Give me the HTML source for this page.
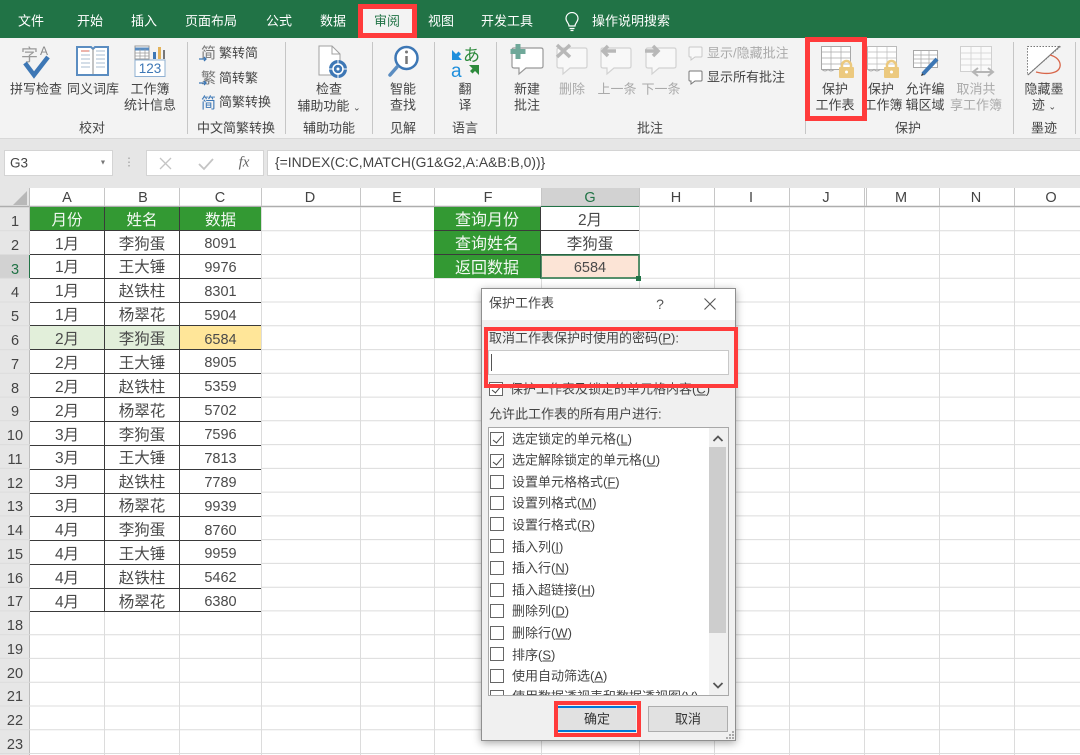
<!DOCTYPE html>
<html lang="zh"><head><meta charset="utf-8"><title>保护工作表</title>
<style>
html,body{margin:0;padding:0}
body{width:1080px;height:755px;overflow:hidden;position:relative;background:#fff;font-family:"Liberation Sans","Noto Sans CJK SC",sans-serif;color:#444}
.a{position:absolute}
.c{position:absolute;transform:translate(-50%,-50%);white-space:nowrap;line-height:1}
.l{position:absolute;transform:translateY(-50%);white-space:nowrap;line-height:1}
.tab{color:#fff;font-size:13px}
.r{font-size:13px;color:#444}
.g{color:#aaa}
.sep{position:absolute;top:42px;height:92px;width:1px;background:#c6c6c6}
.ch{font-size:14.5px;color:#444;top:198px}
.rh{font-size:14.5px;color:#444;left:15px}
.tbl{position:absolute;display:grid;gap:1px;background:#3a3a3a;font-size:15.5px;line-height:1;color:#4a4a4a}
.tbl div{background:#fff;display:flex;align-items:center;justify-content:center;white-space:nowrap;min-height:0;overflow:hidden;box-sizing:border-box;padding-top:4px}
.tbl .h{background:#339933;color:#f2f8f2}
.tbl .n{font-size:14.5px}
.red{position:absolute;border:4px solid #ff3b3b;box-sizing:border-box}
.cb{position:absolute;left:490px;width:14px;height:14px;box-sizing:border-box;border:1px solid #666;background:#fff}
.cb.on::after{content:"";position:absolute;left:3.5px;top:0.5px;width:4px;height:8px;border:solid #444;border-width:0 1.3px 1.3px 0;transform:rotate(40deg)}
.it{position:absolute;left:512px;font-size:13px;color:#444;white-space:nowrap;line-height:1;transform:translateY(-50%)}
</style></head><body>

<!-- title / tabs -->
<div class="a" style="left:0;top:0;width:1080px;height:38px;background:#217346"></div>
<div class="a" style="left:358px;top:4px;width:59px;height:34px;background:#f3f3f3"></div>
<div class="c tab" style="left:31px;top:21px">文件</div>
<div class="c tab" style="left:90px;top:21px">开始</div>
<div class="c tab" style="left:144px;top:21px">插入</div>
<div class="c tab" style="left:211px;top:21px">页面布局</div>
<div class="c tab" style="left:279px;top:21px">公式</div>
<div class="c tab" style="left:333px;top:21px">数据</div>
<div class="c tab" style="left:387px;top:21px;color:#217346">审阅</div>
<div class="c tab" style="left:441px;top:21px">视图</div>
<div class="c tab" style="left:507px;top:21px">开发工具</div>
<div class="c tab" style="left:631px;top:21px">操作说明搜索</div>
<svg class="a" style="left:563px;top:12px" width="18" height="20" viewBox="0 0 18 20" fill="none" stroke="#fff" stroke-width="1.2"><path d="M6 14c0-3-3-4-3-7.500a6 6 0 0 1 12 0c0 3.500-3 4.500-3 7.500z"/><path d="M6.500 16.500h5M7.500 18.500h3"/></svg>

<!-- ribbon -->
<div class="a" style="left:0;top:38px;width:1080px;height:100px;background:#f3f3f3"></div>
<div class="a" style="left:0;top:138px;width:1080px;height:50px;background:#e6e6e6;border-top:1px solid #d8d8d8;box-sizing:border-box"></div>
<div class="sep" style="left:187px"></div><div class="sep" style="left:285px"></div><div class="sep" style="left:372px"></div><div class="sep" style="left:434px"></div><div class="sep" style="left:496px"></div><div class="sep" style="left:805px"></div><div class="sep" style="left:1013px"></div><div class="sep" style="left:1075px"></div>

<svg class="a" style="left:0;top:38px;overflow:visible" width="1080" height="100" viewBox="0 38 1080 100" fill="none">
<!-- spell -->
<text x="21" y="61" font-size="17" fill="#9a9a9a" font-family="Liberation Sans,Noto Sans CJK SC,sans-serif">字</text>
<text x="40" y="55" font-size="12" fill="#8a8a8a" font-family="Liberation Sans,sans-serif">A</text>
<path d="M25 63l9 12 14-18" stroke="#3d77b5" stroke-width="4.500"/>
<!-- book -->
<path d="M77 47h14l2 2 2-2h13v28H77z" fill="#fff" stroke="#5b8dc1" stroke-width="2"/>
<path d="M93 49v25" stroke="#8a8a8a"/>
<path d="M81 51h9M81 55h9M81 59h9M81 63h9M81 67h9M96 51h9M96 55h9M96 59h9M96 63h9M96 67h9" stroke="#a8bcd2"/>
<path d="M81 51h8" stroke="#d86a5a"/>
<!-- stats -->
<rect x="135" y="46" width="14" height="13" fill="#fff" stroke="#9a9a9a"/>
<path d="M135 49h14" stroke="#5b8dc1" stroke-width="3"/><path d="M135 53h14M135 56h14M140 49v10M145 49v10" stroke="#9a9a9a" stroke-width=".7"/>
<path d="M153 52h3v7h-3z" fill="#3d77b5"/><path d="M158 47h3v12h-3z" fill="#e3b35b"/><path d="M163 50h2v9h-2z" fill="#777"/>
<rect x="135" y="60" width="30" height="16.500" fill="#fff" stroke="#8fb0d2"/>
<text x="150" y="73" font-size="13.500" fill="#3d77b5" text-anchor="middle" font-family="Liberation Sans,sans-serif">123</text>
<!-- convert -->
<g font-family="Liberation Sans,Noto Sans CJK SC,sans-serif" font-size="15" fill="#777">
<text x="201" y="58">简</text><text x="201" y="83">繁</text><text x="201" y="108" fill="#3d77b5">简</text></g>
<path d="M199 59h7m-2-2l2 2-2 2M199 83h7m-2-2l2 2-2 2" stroke="#3d77b5" stroke-width="1.300"/>
<!-- doc -->
<path d="M319 46h13l8 8v21h-21z" fill="#fff" stroke="#a0a0a0"/><path d="M332 46v8h8" stroke="#a0a0a0"/>
<circle cx="338" cy="69" r="9" fill="#3d77b5"/><circle cx="338" cy="69" r="5" fill="none" stroke="#fff" stroke-width="1.500"/><circle cx="338" cy="69" r="1.500" fill="#fff"/><path d="M338 60v5M338 73v5M329 69h5M342 69h5" stroke="#fff"/>
<!-- smart -->
<circle cx="406.500" cy="58" r="11" fill="#fff" stroke="#3d77b5" stroke-width="2.500"/>
<path d="M406.500 56v8" stroke="#777" stroke-width="2.500"/><circle cx="406.500" cy="52" r="1.500" fill="#777"/>
<path d="M397 67l-7 8" stroke="#5b8dc1" stroke-width="3.500" stroke-linecap="round"/>
<!-- translate -->
<text x="463" y="61" font-size="17" fill="#2e8b3d" font-family="Noto Sans CJK JP,sans-serif">あ</text>
<text x="451" y="77" font-size="19" fill="#1f8fdc" font-family="Liberation Sans,sans-serif">a</text>
<path d="M452 50v10h10l-3.500-3.500 2.500-2.500-2.500-2.500-2.500 2.500z" fill="#1f8fdc"/>
<path d="M479 75v-10h-10l3.500 3.500-2.500 2.500 2.500 2.500 2.500-2.500z" fill="#2e8b3d"/>
<!-- new comment -->
<path d="M514 48h27q2 0 2 2v16q0 2-2 2h-15l-7 6v-6h-5q-2 0-2-2V50q0-2 2-2z" fill="#fff" stroke="#999" stroke-width="1.200"/>
<path d="M518 44v15M510.500 51.500h15" stroke="#6fa899" stroke-width="5"/>
<g stroke="#d2d2d2" stroke-width="1.200" fill="#f8f8f8">
<path d="M559 48h26q2 0 2 2v16q0 2-2 2h-15l-7 6v-6h-4q-2 0-2-2V50q0-2 2-2z"/>
<path d="M603 48h26q2 0 2 2v16q0 2-2 2h-15l-7 6v-6h-4q-2 0-2-2V50q0-2 2-2z"/>
<path d="M648 48h26q2 0 2 2v16q0 2-2 2h-15l-7 6v-6h-4q-2 0-2-2V50q0-2 2-2z"/>
</g>
<path d="M557 45l13 12M570 45l-13 12" stroke="#b8b8b8" stroke-width="3.500"/>
<path d="M616 51h-13m5-5l-5 5 5 5" stroke="#b8b8b8" stroke-width="3.500"/>
<path d="M645 51h13m-5-5l5 5-5 5" stroke="#b8b8b8" stroke-width="3.500"/>
<path d="M690 47h11q1 0 1 1v8q0 1-1 1h-6l-4 3v-3h-1q-1 0-1-1v-8q0-1 1-1z" stroke="#c8c8c8" fill="#f8f8f8"/>
<path d="M690 71h11q1 0 1 1v8q0 1-1 1h-6l-4 3v-3h-1q-1 0-1-1v-8q0-1 1-1z" stroke="#777" fill="#fff"/>
<!-- protect sheet -->
<g stroke="#a8a8a8" fill="#fff">
<rect x="821.500" y="46.500" width="29" height="23"/><path d="M821.500 52h29M821.500 58h29M821.500 64h29M831 46.500v23M841 46.500v23" stroke-width=".7"/>
<rect x="867.500" y="46.500" width="29" height="23" stroke="#bbb"/><path d="M867.500 52h29M867.500 58h29M867.500 64h29M877 46.500v23M887 46.500v23" stroke="#bbb" stroke-width=".7"/>
<rect x="913.500" y="50.500" width="24" height="17"/><path d="M913.500 55h24M913.500 59h24M913.500 63h24M921 50.500v17M929 50.500v17" stroke-width=".7"/>
</g>
<path d="M822 69.500q3 3 6 0 3 3 6 0M868 69.500q3 3 6 0 3 3 6 0" stroke="#a8a8a8"/>
<g fill="#ecc97e" stroke="none"><rect x="839" y="67" width="15" height="11" rx="1"/><rect x="884" y="67" width="15" height="11" rx="1"/></g>
<path d="M842 67v-1.500a4.500 4.500 0 0 1 9 0V67M887 67v-1.500a4.500 4.500 0 0 1 9 0V67" stroke="#ecc97e" stroke-width="2.500"/>
<circle cx="846.500" cy="72" r="1.500" fill="#fff"/><circle cx="891.500" cy="72" r="1.500" fill="#fff"/>
<path d="M923 74l14-15" stroke="#3d77b5" stroke-width="4"/>
<path d="M921 76l1-3 2 2z" fill="#333"/>
<!-- share -->
<g stroke="#d0d0d0" fill="#fafafa"><rect x="960.500" y="46.500" width="31" height="25"/><path d="M960.500 53h31M960.500 59h31M960.500 65h31M971 46.500v25M981 46.500v25" stroke-width=".8"/></g>
<path d="M974 72h18m-14-4l-5 4 5 4m10-8l5 4-5 4" stroke="#b5b5b5" stroke-width="2"/>
<!-- ink -->
<path d="M1027.500 46.500h33L1027.500 75z" fill="#fff" stroke="#777" stroke-dasharray="1.500 1.500"/>
<path d="M1028 75l32-29" stroke="#777"/>
<path d="M1050 55c12 3 13 14 5 17-5 2-11 2-19 0" stroke="#d8664a" stroke-width="1.300"/>
</svg>

<div class="c r" style="left:36px;top:89px">拼写检查</div>
<div class="c r" style="left:93px;top:89px">同义词库</div>
<div class="c r" style="left:150px;top:89px">工作簿</div>
<div class="c r" style="left:150px;top:105px">统计信息</div>
<div class="c r" style="left:92px;top:128px">校对</div>
<div class="l r" style="left:219px;top:53px">繁转简</div>
<div class="l r" style="left:219px;top:78px">简转繁</div>
<div class="l r" style="left:219px;top:102px">简繁转换</div>
<div class="c r" style="left:236px;top:128px">中文简繁转换</div>
<div class="c r" style="left:329px;top:89px">检查</div>
<div class="c r" style="left:329px;top:106px">辅助功能 <span style="font-size:9px">⌄</span></div>
<div class="c r" style="left:329px;top:128px">辅助功能</div>
<div class="c r" style="left:403px;top:89px">智能</div>
<div class="c r" style="left:403px;top:105px">查找</div>
<div class="c r" style="left:403px;top:128px">见解</div>
<div class="c r" style="left:465px;top:89px">翻</div>
<div class="c r" style="left:465px;top:105px">译</div>
<div class="c r" style="left:465px;top:128px">语言</div>
<div class="c r" style="left:527px;top:89px">新建</div>
<div class="c r" style="left:527px;top:105px">批注</div>
<div class="c r g" style="left:572px;top:89px">删除</div>
<div class="c r g" style="left:617px;top:89px">上一条</div>
<div class="c r g" style="left:661px;top:89px">下一条</div>
<div class="l r g" style="left:707px;top:53px">显示/隐藏批注</div>
<div class="l r" style="left:707px;top:77px">显示所有批注</div>
<div class="c r" style="left:650px;top:128px">批注</div>
<div class="c r" style="left:835px;top:89px">保护</div>
<div class="c r" style="left:835px;top:105px">工作表</div>
<div class="c r" style="left:881px;top:89px">保护</div>
<div class="c r" style="left:883px;top:105px">工作簿</div>
<div class="c r" style="left:925px;top:89px">允许编</div>
<div class="c r" style="left:925px;top:105px">辑区域</div>
<div class="c r g" style="left:976px;top:89px">取消共</div>
<div class="c r g" style="left:976px;top:105px">享工作簿</div>
<div class="c r" style="left:908px;top:128px">保护</div>
<div class="c r" style="left:1044px;top:89px">隐藏墨</div>
<div class="c r" style="left:1044px;top:105px">迹 <span style="font-size:9px">⌄</span></div>
<div class="c r" style="left:1044px;top:128px">墨迹</div>

<!-- formula bar -->
<div class="a" style="left:4px;top:150px;width:109px;height:26px;background:#fff;border:1px solid #d4d4d4;box-sizing:border-box"></div>
<div class="l" style="left:10px;top:163px;font-size:13.500px">G3</div>
<div class="c" style="left:103px;top:163px;font-size:7px;color:#777">▼</div>
<div class="c" style="left:129px;top:163px;font-size:11px;color:#999">⋮</div>
<div class="a" style="left:146px;top:150px;width:118px;height:26px;background:#fff;border:1px solid #d4d4d4;box-sizing:border-box"></div>
<svg class="a" style="left:146px;top:150px" width="118" height="26" fill="none"><path d="M14 8l11 11M25 8L14 19" stroke="#c4c4c4" stroke-width="1.300"/><path d="M53 14l5 5 9-10" stroke="#c4c4c4" stroke-width="1.800"/></svg>
<div class="c" style="left:244px;top:163px;font-size:15px;font-family:'Liberation Serif',serif;font-style:italic;color:#666">fx</div>
<div class="a" style="left:267px;top:150px;width:813px;height:26px;background:#fff;border:1px solid #d4d4d4;border-right:0;box-sizing:border-box"></div>
<div class="l" style="left:275px;top:163px;font-size:13.900px;color:#444">{=INDEX(C:C,MATCH(G1&amp;G2,A:A&amp;B:B,0))}</div>

<!-- headers -->
<div class="a" style="left:0;top:188px;width:30px;height:567px;background:#e6e6e6"></div>
<div class="a" style="left:541px;top:188px;width:98px;height:19px;background:#d2d2d2"></div>
<div class="a" style="left:0;top:254.500px;width:30px;height:23.800px;background:#d2d2d2"></div>
<svg class="a" style="left:0;top:188px" width="1080" height="567" fill="none">
<path d="M27 3v14H13z" fill="#b8b8b8"/>
<path d="M0 18.500h1080" stroke="#aeaeae" stroke-width="1.500"/>
<path d="M29.500 0v567" stroke="#bdbdbd"/>
<g stroke="#c6c6c6"><path d="M104.500 0v18M179.500 0v18M261.500 0v18M360.500 0v18M434.500 0v18M541.500 0v18M639.500 0v18M714.500 0v18M789.500 0v18M864.500 0v18M866.500 0v18M939.500 0v18M1014.500 0v18"/></g>
<g stroke="#dcdcdc">
<path d="M104.500 19v548M179.500 19v548M261.500 19v548M360.500 19v548M434.500 19v548M541.500 19v548M639.500 19v548M714.500 19v548M789.500 19v548M864.500 19v548M939.500 19v548M1014.500 19v548"/>
<path d="M0 42.800h1080M0 66.500h1080M0 90.300h1080M0 114h1080M0 137.800h1080M0 161.600h1080M0 185.300h1080M0 209.100h1080M0 232.800h1080M0 256.600h1080M0 280.400h1080M0 304.100h1080M0 327.900h1080M0 351.600h1080M0 375.400h1080M0 399.200h1080M0 422.900h1080M0 446.700h1080M0 470.400h1080M0 494.200h1080M0 518h1080M0 541.700h1080M0 565.500h1080"/>
</g>
</svg>
<div class="a" style="left:541px;top:206px;width:98px;height:2px;background:#217346"></div>
<div class="a" style="left:29px;top:254.500px;width:1px;height:23.800px;background:#217346"></div>

<div class="c ch" style="left:67px">A</div><div class="c ch" style="left:143px">B</div><div class="c ch" style="left:220px">C</div><div class="c ch" style="left:310px">D</div><div class="c ch" style="left:397px">E</div><div class="c ch" style="left:488px">F</div><div class="c ch" style="left:590px;color:#217346">G</div><div class="c ch" style="left:676px">H</div><div class="c ch" style="left:751px">I</div><div class="c ch" style="left:826px">J</div><div class="c ch" style="left:901px">M</div><div class="c ch" style="left:976px">N</div><div class="c ch" style="left:1051px">O</div>

<div class="c rh" style="top:222px">1</div><div class="c rh" style="top:246px">2</div><div class="c rh" style="top:270px;color:#217346">3</div><div class="c rh" style="top:293px">4</div><div class="c rh" style="top:317px">5</div><div class="c rh" style="top:341px">6</div><div class="c rh" style="top:365px">7</div><div class="c rh" style="top:389px">8</div><div class="c rh" style="top:412px">9</div><div class="c rh" style="top:436px">10</div><div class="c rh" style="top:460px">11</div><div class="c rh" style="top:484px">12</div><div class="c rh" style="top:507px">13</div><div class="c rh" style="top:531px">14</div><div class="c rh" style="top:555px">15</div><div class="c rh" style="top:579px">16</div><div class="c rh" style="top:602px">17</div><div class="c rh" style="top:626px">18</div><div class="c rh" style="top:650px">19</div><div class="c rh" style="top:674px">20</div><div class="c rh" style="top:697px">21</div><div class="c rh" style="top:721px">22</div><div class="c rh" style="top:745px">23</div>

<!-- main table -->
<div class="tbl" style="left:30px;top:207px;width:231px;height:405px;grid-template-columns:74px 74px 81px;grid-template-rows:repeat(17,22.880px)">
<div class="h">月份</div><div class="h">姓名</div><div class="h">数据</div>
<div>1月</div><div>李狗蛋</div><div class="n">8091</div>
<div>1月</div><div>王大锤</div><div class="n">9976</div>
<div>1月</div><div>赵铁柱</div><div class="n">8301</div>
<div>1月</div><div>杨翠花</div><div class="n">5904</div>
<div style="background:#e2efda">2月</div><div style="background:#e2efda">李狗蛋</div><div class="n" style="background:#ffe699">6584</div>
<div>2月</div><div>王大锤</div><div class="n">8905</div>
<div>2月</div><div>赵铁柱</div><div class="n">5359</div>
<div>2月</div><div>杨翠花</div><div class="n">5702</div>
<div>3月</div><div>李狗蛋</div><div class="n">7596</div>
<div>3月</div><div>王大锤</div><div class="n">7813</div>
<div>3月</div><div>赵铁柱</div><div class="n">7789</div>
<div>3月</div><div>杨翠花</div><div class="n">9939</div>
<div>4月</div><div>李狗蛋</div><div class="n">8760</div>
<div>4月</div><div>王大锤</div><div class="n">9959</div>
<div>4月</div><div>赵铁柱</div><div class="n">5462</div>
<div>4月</div><div>杨翠花</div><div class="n">6380</div>
</div>
<div class="a" style="left:30px;top:611px;width:231px;height:1px;background:#3a3a3a"></div>

<!-- lookup table -->
<div class="tbl" style="left:434px;top:207px;width:205px;height:71px;grid-template-columns:106px 98px;grid-template-rows:23px 23px 23px">
<div class="h" style="font-size:16px">查询月份</div><div>2月</div>
<div class="h" style="font-size:16px">查询姓名</div><div>李狗蛋</div>
<div class="h" style="font-size:16px">返回数据</div><div class="n" style="background:#fce4d6">6584</div>
</div>
<div class="a" style="left:540px;top:254px;width:100px;height:25px;border:2px solid #217346;box-sizing:border-box;opacity:.75"></div>
<div class="a" style="left:636px;top:276px;width:5px;height:5px;background:#217346"></div>

<!-- dialog -->
<div class="a" style="left:481px;top:288px;width:255px;height:453px;background:#f0f0f0;border:1px solid #8f8f8f;box-sizing:border-box;box-shadow:0 2px 8px rgba(0,0,0,.35)"></div>
<div class="a" style="left:482px;top:289px;width:253px;height:31px;background:#fff"></div>
<div class="l" style="left:489px;top:303px;font-size:13px">保护工作表</div>
<div class="c" style="left:660px;top:304px;font-size:14px;color:#555">?</div>
<svg class="a" style="left:703px;top:297px" width="14" height="14" fill="none"><path d="M1.500 1.500l11 11M12.500 1.500l-11 11" stroke="#555" stroke-width="1.100"/></svg>
<div class="l" style="left:489px;top:338px;font-size:13px">取消工作表保护时使用的密码(<u>P</u>):</div>
<div class="a" style="left:488px;top:350px;width:241px;height:25px;background:#fff;border:1px solid #c8c8c8;box-sizing:border-box"></div>
<div class="a" style="left:491px;top:354px;width:1px;height:17px;background:#555"></div>
<div class="cb on" style="top:382px;left:489px"></div>
<div class="it" style="top:389px;left:510px">保护工作表及锁定的单元格内容(<u>C</u>)</div>
<div class="red" style="left:484px;top:327px;width:254px;height:61px"></div>
<div class="l" style="left:489px;top:414px;font-size:13px">允许此工作表的所有用户进行:</div>

<div class="a" style="left:488px;top:427px;width:241px;height:269px;background:#fff;border:1px solid #a8a8a8;box-sizing:border-box;overflow:hidden"></div>
<div class="a" style="left:709px;top:428px;width:19px;height:267px;background:#f0f0f0"></div>
<div class="a" style="left:709px;top:447px;width:17px;height:186px;background:#cdcdcd"></div>
<svg class="a" style="left:712px;top:434px" width="12" height="256" fill="none" stroke="#555" stroke-width="1.800"><path d="M1.500 7l4.500-4.500L10.500 7M1.500 249l4.500 4.500 4.500-4.500"/></svg>

<div class="cb on" style="top:432px"></div><div class="it" style="top:439px">选定锁定的单元格(<u>L</u>)</div>
<div class="cb on" style="top:454px"></div><div class="it" style="top:460px">选定解除锁定的单元格(<u>U</u>)</div>
<div class="cb" style="top:475px"></div><div class="it" style="top:482px">设置单元格格式(<u>F</u>)</div>
<div class="cb" style="top:496px"></div><div class="it" style="top:503px">设置列格式(<u>M</u>)</div>
<div class="cb" style="top:517px"></div><div class="it" style="top:525px">设置行格式(<u>R</u>)</div>
<div class="cb" style="top:539px"></div><div class="it" style="top:547px">插入列(<u>I</u>)</div>
<div class="cb" style="top:561px"></div><div class="it" style="top:568px">插入行(<u>N</u>)</div>
<div class="cb" style="top:583px"></div><div class="it" style="top:590px">插入超链接(<u>H</u>)</div>
<div class="cb" style="top:604px"></div><div class="it" style="top:611px">删除列(<u>D</u>)</div>
<div class="cb" style="top:626px"></div><div class="it" style="top:633px">删除行(<u>W</u>)</div>
<div class="cb" style="top:647px"></div><div class="it" style="top:655px">排序(<u>S</u>)</div>
<div class="cb" style="top:669px"></div><div class="it" style="top:676px">使用自动筛选(<u>A</u>)</div>
<div class="a" style="left:489px;top:690px;width:220px;height:5px;overflow:hidden">
<div class="a" style="left:1px;top:0;width:14px;height:14px;box-sizing:border-box;border:1px solid #666;background:#fff"></div>
<div class="a" style="left:23px;top:0;font-size:13px;line-height:13px;white-space:nowrap">使用数据透视表和数据透视图(<u>V</u>)</div></div>
<div class="a" style="left:488px;top:695px;width:241px;height:1px;background:#a8a8a8"></div>

<div class="a" style="left:558px;top:706px;width:78px;height:26px;background:#e1e1e1;border-top:2px solid #0078d7;border-bottom:2px solid #0078d7;box-sizing:border-box"></div>
<div class="c" style="left:597px;top:719px;font-size:13px;color:#333">确定</div>
<div class="red" style="left:554px;top:701px;width:87px;height:36px"></div>
<div class="a" style="left:648px;top:706px;width:80px;height:26px;background:#e1e1e1;border:1px solid #adadad;box-sizing:border-box"></div>
<div class="c" style="left:688px;top:719px;font-size:13px;color:#333">取消</div>
<svg class="a" style="left:725px;top:730px" width="10" height="10" fill="#aaa"><rect x="7" y="1" width="2" height="2"/><rect x="4" y="4" width="2" height="2"/><rect x="7" y="4" width="2" height="2"/><rect x="1" y="7" width="2" height="2"/><rect x="4" y="7" width="2" height="2"/><rect x="7" y="7" width="2" height="2"/></svg>

<!-- other red boxes -->
<div class="red" style="left:358px;top:4px;width:59px;height:34px;border-width:5px"></div>
<div class="red" style="left:805px;top:37px;width:62px;height:84px;border-width:5px"></div>
</body></html>
